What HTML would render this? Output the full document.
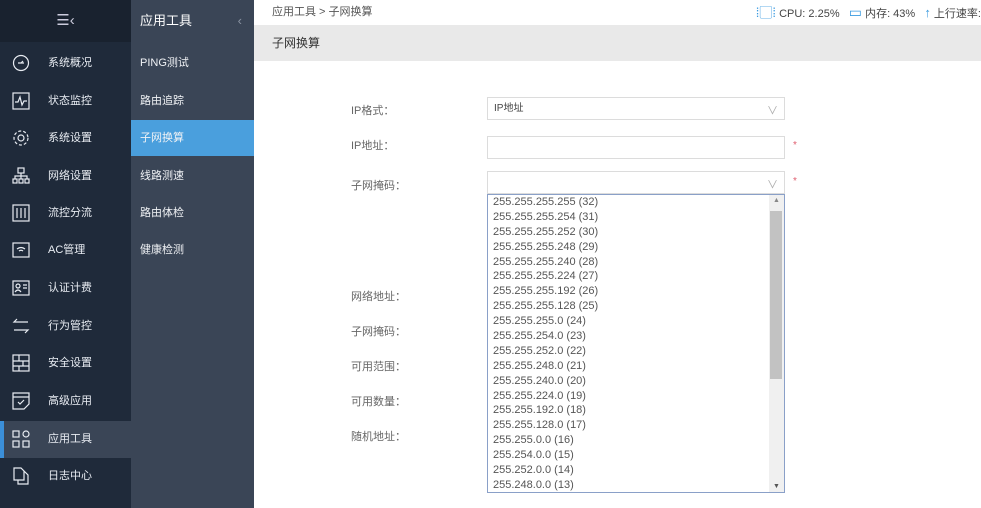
<!DOCTYPE html>
<html><head><meta charset="utf-8"><style>
*{margin:0;padding:0;box-sizing:border-box}
body{width:981px;height:508px;overflow:hidden;background:#fff;font-family:"Liberation Sans","Noto Sans CJK SC",sans-serif;font-size:12px;position:relative}
.c1{position:absolute;left:0;top:0;width:131px;height:508px;background:#1f2a3a}
.c1 .hd{height:42px;background:#19222f;color:#ccd;text-align:center;line-height:42px;font-size:15px}
.it{position:absolute;left:0;width:131px;height:37px;color:#e8ecf2;font-size:11px;line-height:37px}
.it span{position:absolute;left:48px}
.it svg{position:absolute;left:12px;top:9px}
.it.act{background:#3a4556;border-left:4px solid #3b8fd9}
.c2{position:absolute;left:131px;top:0;width:123px;height:508px;background:#3a4556}
.c2 .hd{height:42px;line-height:42px;color:#fff;font-size:13px;padding-left:9px}
.c2 .hd b{position:absolute;right:12px;top:0;font-weight:normal;color:#8a93a2}
.s{position:absolute;left:0;width:123px;height:36px;line-height:36px;padding-left:9px;color:#f0f2f5;font-size:11px}
.s.act{background:#4a9fdd}
.top{position:absolute;left:254px;top:0;right:0;height:25px;font-size:11px;color:#555;line-height:24px;padding-left:18px}
.top .r{position:absolute;right:0;top:0;color:#444}
.tb{position:absolute;left:254px;top:25px;right:0;height:36px;background:#e9e9e9;line-height:36px;padding-left:18px;font-size:12px;color:#333}
.lb{position:absolute;left:351px;font-size:11px;color:#666}
.in{position:absolute;left:487px;width:298px;height:23px;border:1px solid #dcdcdc;background:#fff;font-size:10px;color:#444;line-height:21px;padding-left:6px}
.ar{position:absolute;right:6px;top:3px;color:#aaa;font-size:11px}
.st{position:absolute;left:793px;color:#e06070;font-size:10px}
.dd{position:absolute;left:487px;top:194px;width:298px;height:299px;border:1px solid #8aa0c8;background:#fff}
.dd div{height:14.9px;line-height:14.9px;font-size:11px;color:#555;padding-left:5px}
.sb{position:absolute;right:0;top:0;width:15px;height:297px;background:#f0f0f0}
.th{position:absolute;left:1px;top:16px;width:12px;height:168px;background:#c2c2c2}
</style></head><body>
<div class="c1"><div class="hd">☰‹</div></div>
<div class="c2"><div class="hd">应用工具<b>‹</b></div></div>
<div class="s" style="left:131px;top:45px">PING测试</div>
<div class="s" style="left:131px;top:83px">路由追踪</div>
<div class="s act" style="left:131px;top:120px">子网换算</div>
<div class="s" style="left:131px;top:158px">线路测速</div>
<div class="s" style="left:131px;top:195px">路由体检</div>
<div class="s" style="left:131px;top:232px">健康检测</div>

<div class="it" style="top:45px"><svg width="18" height="18" fill="none" stroke="#e8ecf2" stroke-width="1.2"><circle cx="9" cy="9" r="7.5"/><path d="M6 9h6M9 9l2-2"/></svg><span>系统概况</span></div>
<div class="it" style="top:83px"><svg width="18" height="18" fill="none" stroke="#e8ecf2" stroke-width="1.2"><rect x="1" y="1" width="16" height="16"/><path d="M3 10h3l2-5 2 8 2-4h3"/></svg><span>状态监控</span></div>
<div class="it" style="top:120px"><svg width="18" height="18" fill="none" stroke="#e8ecf2" stroke-width="1.2"><circle cx="9" cy="9" r="3"/><circle cx="9" cy="9" r="7" stroke-dasharray="3 2"/></svg><span>系统设置</span></div>
<div class="it" style="top:158px"><svg width="18" height="18" fill="none" stroke="#e8ecf2" stroke-width="1.2"><rect x="6" y="1" width="6" height="5"/><rect x="1" y="12" width="4" height="4"/><rect x="7" y="12" width="4" height="4"/><rect x="13" y="12" width="4" height="4"/><path d="M9 6v6M3 12V9h12v3"/></svg><span>网络设置</span></div>
<div class="it" style="top:195px"><svg width="18" height="18" fill="none" stroke="#e8ecf2" stroke-width="1.2"><rect x="1" y="1" width="16" height="16"/><path d="M5 4v10M9 4v10M13 4v10"/></svg><span>流控分流</span></div>
<div class="it" style="top:232px"><svg width="18" height="18" fill="none" stroke="#e8ecf2" stroke-width="1.2"><rect x="1" y="2" width="16" height="14"/><path d="M5 8q4-3 8 0M7 10q2-1.5 4 0"/></svg><span>AC管理</span></div>
<div class="it" style="top:270px"><svg width="18" height="18" fill="none" stroke="#e8ecf2" stroke-width="1.2"><rect x="1" y="2" width="16" height="14"/><circle cx="6" cy="7" r="2"/><path d="M3 13q3-4 6 0M11 6h4M11 9h4"/></svg><span>认证计费</span></div>
<div class="it" style="top:308px"><svg width="18" height="18" fill="none" stroke="#e8ecf2" stroke-width="1.2"><path d="M16 5H2l3-3M2 13h14l-3 3"/></svg><span>行为管控</span></div>
<div class="it" style="top:345px"><svg width="18" height="18" fill="none" stroke="#e8ecf2" stroke-width="1.2"><rect x="1" y="1" width="16" height="16"/><path d="M1 7h16M1 12h16M7 1v6M11 7v5M7 12v5"/></svg><span>安全设置</span></div>
<div class="it" style="top:383px"><svg width="18" height="18" fill="none" stroke="#e8ecf2" stroke-width="1.2"><path d="M1 1h16v11l-5 5H1z"/><path d="M1 5h16M6 10l2 2 4-4"/></svg><span>高级应用</span></div>
<div class="it act" style="top:421px"><svg width="18" height="18" fill="none" stroke="#e8ecf2" stroke-width="1.2" style="left:8px"><rect x="1" y="1" width="6" height="6"/><rect x="1" y="11" width="6" height="6"/><rect x="11" y="11" width="6" height="6"/><circle cx="14" cy="4" r="3"/></svg><span style="left:44px">应用工具</span></div>
<div class="it" style="top:458px"><svg width="18" height="18" fill="none" stroke="#e8ecf2" stroke-width="1.2"><path d="M2 1h7l3 3v9H2zM6 13v4h10V8l-4-4"/></svg><span>日志中心</span></div>

<div class="top">应用工具 &gt; 子网换算<span class="r"><span style="color:#3b9be0;font-size:13px">⁞▢⁞</span> CPU: 2.25% &nbsp;&nbsp;<span style="color:#3b9be0;font-size:14px">▭</span> 内存: 43% &nbsp;&nbsp;<span style="color:#3b9be0;font-size:13px">↑</span> 上行速率:</span></div>
<div class="tb">子网换算</div>

<div class="lb" style="top:102px">IP格式：</div>
<div class="lb" style="top:137px">IP地址：</div>
<div class="lb" style="top:177px">子网掩码：</div>
<div class="lb" style="top:288px">网络地址：</div>
<div class="lb" style="top:323px">子网掩码：</div>
<div class="lb" style="top:358px">可用范围：</div>
<div class="lb" style="top:393px">可用数量：</div>
<div class="lb" style="top:428px">随机地址：</div>

<div class="in" style="top:97px">IP地址<span class="ar">∨</span></div>
<div class="in" style="top:136px"></div><div class="st" style="top:140px">*</div>
<div class="in" style="top:171px"><span class="ar">∨</span></div><div class="st" style="top:176px">*</div>
<div class="dd">
<div>255.255.255.255 (32)</div><div>255.255.255.254 (31)</div><div>255.255.255.252 (30)</div><div>255.255.255.248 (29)</div><div>255.255.255.240 (28)</div><div>255.255.255.224 (27)</div><div>255.255.255.192 (26)</div><div>255.255.255.128 (25)</div><div>255.255.255.0 (24)</div><div>255.255.254.0 (23)</div><div>255.255.252.0 (22)</div><div>255.255.248.0 (21)</div><div>255.255.240.0 (20)</div><div>255.255.224.0 (19)</div><div>255.255.192.0 (18)</div><div>255.255.128.0 (17)</div><div>255.255.0.0 (16)</div><div>255.254.0.0 (15)</div><div>255.252.0.0 (14)</div><div>255.248.0.0 (13)</div>
<span class="sb"><span class="th"></span><span style="position:absolute;top:2px;left:4px;font-size:7px;color:#888">▲</span><span style="position:absolute;bottom:2px;left:4px;font-size:7px;color:#555">▼</span></span>
</div>
</body></html>
